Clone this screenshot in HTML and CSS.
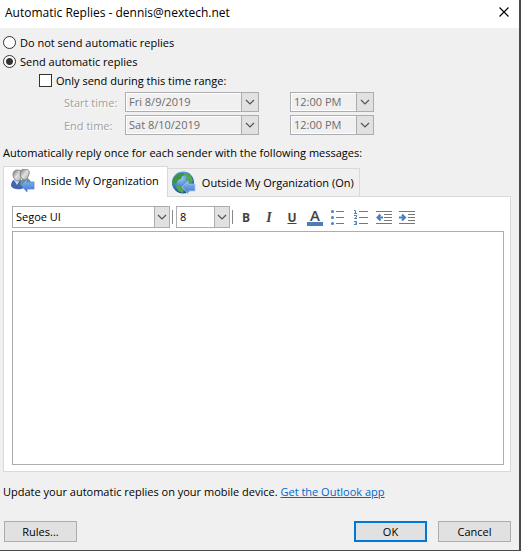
FILE: index.html
```html
<!DOCTYPE html>
<html lang="en">
<head>
    <meta charset="UTF-8">
    <meta name="viewport" content="width=device-width, initial-scale=1.0">
    <title>Automatic Replies</title>
    <link rel="stylesheet" href="styles.css">
</head>
<body>
    <form class="dialog">
        <!-- Title bar -->
        <header class="title-bar">
            <h1>Automatic Replies - dennis@nextech.net</h1>
            <button type="button" class="close" aria-label="Close">
                <svg width="10" height="10" viewBox="0 0 10 10"><path d="M0.5 0.5l9 9M9.5 0.5l-9 9" stroke="#000" stroke-width="1.1"/></svg>
            </button>
        </header>

        <main class="content">
            <!-- Send options -->
            <div class="options">
                <label class="choice"><input type="radio" name="send">Do not send automatic replies</label>
                <label class="choice"><input type="radio" name="send" checked>Send automatic replies</label>
                <label class="choice range"><input type="checkbox">Only send during this time range:</label>
            </div>

            <div class="times">
                <div class="time-row">
                    <label for="startDate">Start time:</label>
                    <div class="combo date">
                        <select id="startDate" disabled><option>Fri 8/9/2019</option></select>
                        <span class="arrow"><svg width="10" height="6" viewBox="0 0 10 6"><path d="M1 1l4 4 4-4"/></svg></span>
                    </div>
                    <div class="combo hour">
                        <select aria-label="Start hour" disabled><option>12:00 PM</option></select>
                        <span class="arrow"><svg width="10" height="6" viewBox="0 0 10 6"><path d="M1 1l4 4 4-4"/></svg></span>
                    </div>
                </div>
                <div class="time-row">
                    <label for="endDate">End time:</label>
                    <div class="combo date">
                        <select id="endDate" disabled><option>Sat 8/10/2019</option></select>
                        <span class="arrow"><svg width="10" height="6" viewBox="0 0 10 6"><path d="M1 1l4 4 4-4"/></svg></span>
                    </div>
                    <div class="combo hour">
                        <select aria-label="End hour" disabled><option>12:00 PM</option></select>
                        <span class="arrow"><svg width="10" height="6" viewBox="0 0 10 6"><path d="M1 1l4 4 4-4"/></svg></span>
                    </div>
                </div>
            </div>

            <p class="hint">Automatically reply once for each sender with the following messages:</p>

            <!-- Tabs -->
            <div class="tabs" role="tablist">
                <button type="button" class="tab active" role="tab" aria-selected="true">
                    <svg width="24" height="24" viewBox="0 0 24 24">
                        <defs>
                            <linearGradient id="arrowFill" x1="0" y1="0" x2="0" y2="1">
                                <stop offset="0" stop-color="#8fbcf0"/>
                                <stop offset="1" stop-color="#3b74cc"/>
                            </linearGradient>
                            <linearGradient id="headFill" x1="0" y1="0" x2="1" y2="1">
                                <stop offset="0" stop-color="#6f6f6f"/>
                                <stop offset="0.5" stop-color="#e2e2e2"/>
                                <stop offset="1" stop-color="#9a9a9a"/>
                            </linearGradient>
                        </defs>
                        <path d="M0 17c0-4 2-7 6-7s6 3 7 9c-4 2-11 2-13-2z" fill="#4763b4"/>
                        <path d="M9 16c0-4 2-7 5-7 4 0 6 2 6 7z" fill="#5f9a8a"/>
                        <path d="M3 11l3 5 3-5z" fill="#cfdcf4"/>
                        <path d="M2 6c0-4 2-5 5-5s4 2 4 5-2 6-4 6-5-3-5-6z" fill="url(#headFill)" stroke="#777" stroke-width="0.8"/>
                        <path d="M9 5c0-4 2-5 5-5s5 2 4 5-2 6-4 6-5-3-5-6z" fill="url(#headFill)" stroke="#777" stroke-width="0.8"/>
                        <path d="M10 16l6-6v3h7v7h-7v3z" fill="url(#arrowFill)" stroke="#5a88d4" stroke-width="0.8"/>
                    </svg>
                    Inside My Organization
                </button>
                <button type="button" class="tab" role="tab" aria-selected="false">
                    <svg width="24" height="24" viewBox="0 0 24 24">
                        <defs>
                            <radialGradient id="globeFill" cx="0.4" cy="0.3" r="0.7">
                                <stop offset="0" stop-color="#9ccdf5"/>
                                <stop offset="0.6" stop-color="#3f7fce"/>
                                <stop offset="1" stop-color="#1d4a96"/>
                            </radialGradient>
                        </defs>
                        <circle cx="11" cy="11.500" r="11" fill="url(#globeFill)"/>
                        <path d="M1 8c2-4 6-7 11-6l1 2-3 1-1 3-3 1-2 4-2-1-1 3c-1-2-1-5 0-7z" fill="#3c9444"/>
                        <path d="M14 2c3 1 6 3 7 8l-2 2-3-1-2-3 1-2-2-2zM4 15l4-1 4 4-1 4c-4-1-6-3-7-7z" fill="#51a850"/>
                        <path d="M10 16l6-6v3h7v7h-7v3z" fill="url(#arrowFill)" stroke="#a9c6f0" stroke-width="0.8"/>
                    </svg>
                    Outside My Organization (On)
                </button>
            </div>

            <div class="panel">
                <div class="toolbar">
                    <div class="combo font-name">
                        <select aria-label="Font"><option>Segoe UI</option></select>
                        <span class="arrow"><svg width="10" height="6" viewBox="0 0 10 6"><path d="M1 1l4 4 4-4"/></svg></span>
                    </div>
                    <span class="separator"></span>
                    <div class="combo font-size">
                        <select aria-label="Font size"><option>8</option></select>
                        <span class="arrow"><svg width="10" height="6" viewBox="0 0 10 6"><path d="M1 1l4 4 4-4"/></svg></span>
                    </div>
                    <span class="separator"></span>
                    <div class="tools">
                        <button type="button" class="tool bold">B</button>
                        <button type="button" class="tool italic">I</button>
                        <button type="button" class="tool underline">U</button>
                        <button type="button" class="tool" aria-label="Font color"><span class="color">A</span></button>
                        <button type="button" class="tool" aria-label="Bullets">
                            <svg width="16" height="16" viewBox="0 0 16 16">
                                <path d="M6 2.500h8M6 8.500h8M6 14.500h8" stroke="#777"/>
                                <circle cx="2.500" cy="2.500" r="1.500" fill="#4a7ebb"/>
                                <circle cx="2.500" cy="8.500" r="1.500" fill="#4a7ebb"/>
                                <circle cx="2.500" cy="14.500" r="1.500" fill="#4a7ebb"/>
                            </svg>
                        </button>
                        <button type="button" class="tool" aria-label="Numbering">
                            <svg width="16" height="16" viewBox="0 0 16 16">
                                <path d="M6 2.500h9M6 8.500h9M6 14.500h9" stroke="#777"/>
                                <path d="M1 1.500h1.500v3M1 4.500h3M1 6.500h2.500v1.500l-2 1.500h2.500M1 12.500h2.500v3h-2.500M2 14h1.500" fill="none" stroke="#4a7ebb"/>
                            </svg>
                        </button>
                        <button type="button" class="tool" aria-label="Decrease indent">
                            <svg width="16" height="16" viewBox="0 0 16 16">
                                <path d="M0 2.500h16M8 5.500h8M8 8.500h8M8 11.500h8M0 14.500h16" stroke="#777"/>
                                <path d="M7 8.500h-5M4.500 5.500l-3 3 3 3" fill="none" stroke="#4a7ebb" stroke-width="2"/>
                            </svg>
                        </button>
                        <button type="button" class="tool" aria-label="Increase indent">
                            <svg width="16" height="16" viewBox="0 0 16 16">
                                <path d="M0 2.500h16M9 5.500h7M9 8.500h7M9 11.500h7M0 14.500h16" stroke="#777"/>
                                <path d="M0 8.500h5M3 5.500l3 3-3 3" fill="none" stroke="#4a7ebb" stroke-width="2"/>
                            </svg>
                        </button>
                    </div>
                </div>
                <textarea class="message" aria-label="Message"></textarea>
            </div>

            <p class="mobile">Update your automatic replies on your mobile device. <a href="#">Get the Outlook app</a></p>

            <!-- Buttons -->
            <footer class="actions">
                <button type="button" class="btn rules">Rules...</button>
                <button type="submit" class="btn primary">OK</button>
                <button type="button" class="btn">Cancel</button>
            </footer>
        </main>
    </form>
</body>
</html>
```
FILE: styles.css
```css
* {
    box-sizing: border-box;
}

body {
    margin: 0;
    font-family: "Open Sans", "Noto Sans", sans-serif;
    font-size: 11px;
    line-height: 15px;
    color: #000;
}

button,
select,
textarea {
    font: inherit;
    color: inherit;
}

.dialog {
    display: flex;
    flex-direction: column;
    min-height: 100vh;
    background: #f0f0f0;
    border-right: 2px solid #4a4a4a;
    border-bottom: 1px solid #4a4a4a;
}

.title-bar {
    display: flex;
    align-items: center;
    justify-content: space-between;
    height: 28px;
    padding: 0 10px 4px 5px;
    background: #fff;
}

.title-bar h1 {
    margin: 0;
    font-size: 12px;
    font-weight: normal;
}

.close {
    display: flex;
    padding: 0;
    border: none;
    background: none;
}

.content {
    flex: 1;
    display: flex;
    flex-direction: column;
    padding: 5px 8px 8px 3px;
}

.options {
    display: flex;
    flex-direction: column;
}

.choice {
    display: flex;
    align-items: center;
    gap: 4px;
    height: 19px;
}

.choice input {
    appearance: none;
    width: 13px;
    height: 13px;
    margin: 0;
    border: 1px solid #333;
    background: #fff;
}

.choice input[type="radio"] {
    border-radius: 50%;
}

.choice input[type="radio"]:checked {
    background: radial-gradient(circle, #333 3px, #fff 4px);
}

.range {
    margin-left: 36px;
}

.times {
    display: flex;
    flex-direction: column;
    gap: 3px;
    padding: 2px 0 0 61px;
    color: #a0a0a0;
}

.time-row {
    display: flex;
    align-items: center;
}

.time-row label {
    width: 61px;
    text-shadow: 1px 1px 0 #fff;
}

.date {
    width: 134px;
}

.hour {
    width: 84px;
    margin-left: 31px;
}

.combo {
    position: relative;
    height: 20px;
}

.combo select {
    appearance: none;
    display: block;
    width: 100%;
    height: 100%;
    padding: 0 20px 1px 3px;
    border: 1px solid #abadb3;
    border-radius: 0;
    background: #fff;
}

.combo select:disabled {
    background: #f0f0f0;
    box-shadow: inset 0 0 0 1px #fff;
    color: #6d6d6d;
    opacity: 1;
}

.arrow {
    position: absolute;
    top: 0;
    right: 0;
    bottom: 0;
    width: 18px;
    display: flex;
    align-items: center;
    justify-content: center;
    border: 1px solid #abadb3;
    background: #e1e1e1;
    pointer-events: none;
}

.toolbar .arrow {
    width: 16px;
}

.arrow path {
    fill: none;
    stroke: #555;
    stroke-width: 1.2;
}

.hint,
.mobile {
    margin: 0;
}

.hint {
    padding: 10px 0 6px;
}

.tabs {
    display: flex;
    align-items: flex-end;
}

.tab {
    display: flex;
    align-items: center;
    gap: 6px;
    height: 28px;
    padding: 0 5px 0 4px;
    border: 1px solid #d9d9d9;
    border-left: none;
    border-bottom: none;
    background: #f0f0f0;
}

.tab.active {
    height: 31px;
    padding: 0 8px 3px 7px;
    border-left: 1px solid #d9d9d9;
    margin-bottom: -1px;
    background: #fff;
    z-index: 1;
}

.panel {
    flex: 1;
    display: flex;
    flex-direction: column;
    gap: 3px;
    padding: 9px 6px 6px 8px;
    border: 1px solid #d9d9d9;
    background: #fff;
}

.toolbar {
    display: flex;
    align-items: center;
    gap: 2px;
}

.toolbar .combo {
    height: 22px;
}

.font-name {
    width: 158px;
}

.font-size {
    width: 54px;
    margin-left: 1px;
}

.separator {
    width: 1px;
    height: 14px;
    background: #888;
}

.tools {
    display: flex;
    gap: 3px;
    margin-left: 1px;
}

.tool {
    display: flex;
    align-items: center;
    justify-content: center;
    width: 20px;
    height: 20px;
    padding: 0;
    border: none;
    background: none;
    color: #444;
    font-size: 12px;
    font-weight: bold;
}

.italic {
    font-family: "Liberation Serif", serif;
    font-size: 14px;
    font-style: italic;
}

.underline {
    text-decoration: underline;
}

.color {
    width: 16px;
    border-bottom: 4px solid #4a7ebb;
    font-size: 15px;
    font-weight: 600;
    line-height: 13px;
}

.message {
    flex: 1;
    width: 100%;
    padding: 4px;
    border: 1px solid #abadb3;
    resize: none;
}

.mobile {
    padding: 12px 0 22px;
}

.mobile a {
    color: #0066cc;
}

.actions {
    display: flex;
    gap: 11px;
    padding-left: 1px;
}

.btn {
    width: 73px;
    height: 21px;
    padding: 0;
    border: 1px solid #adadad;
    background: #e1e1e1;
}

.btn.primary {
    border: 2px solid #0078d7;
}

.rules {
    margin-right: auto;
}
```
